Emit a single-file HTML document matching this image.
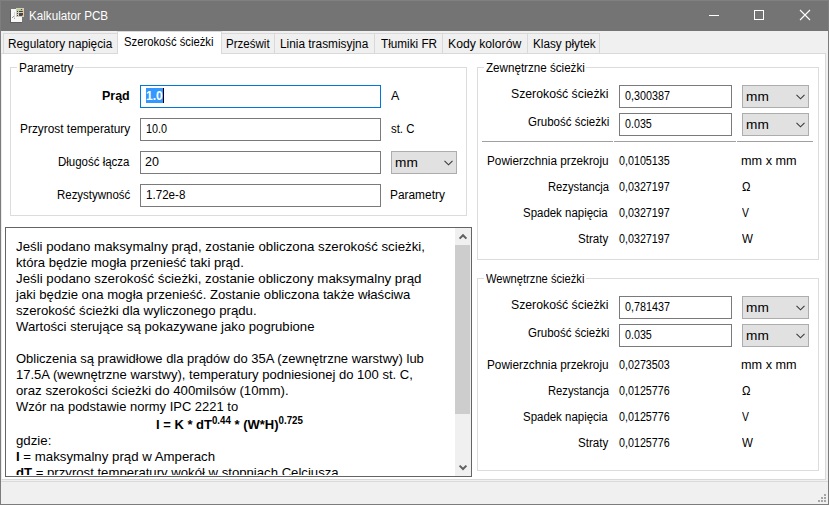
<!DOCTYPE html>
<html><head><meta charset="utf-8"><style>
html,body{margin:0;padding:0;}
body{width:829px;height:505px;position:relative;overflow:hidden;background:#f0f0f0;font-family:"Liberation Sans",sans-serif;}
.a{position:absolute;}
.t{position:absolute;white-space:pre;}
sup{font-size:10px;vertical-align:0;position:relative;top:-5px;line-height:0;}
</style></head><body>
<div class="a" style="left:0px;top:0px;width:829px;height:505px;background:#f0f0f0;"></div>
<div class="a" style="left:0px;top:0px;width:829px;height:31px;background:#747474;"></div>
<div class="a" style="left:0px;top:0px;width:829px;height:1px;background:#808080;"></div>
<div class="a" style="left:0px;top:0px;width:1px;height:31px;background:#7e7e7e;"></div>
<div class="a" style="left:828px;top:0px;width:1px;height:31px;background:#7e7e7e;"></div>
<div class="a" style="left:0px;top:31px;width:1px;height:474px;background:#7c7c7c;"></div>
<div class="a" style="left:828px;top:31px;width:1px;height:474px;background:#7c7c7c;"></div>
<div class="a" style="left:0px;top:504px;width:829px;height:1px;background:#7c7c7c;"></div>
<svg class="a" style="left:8px;top:5px" width="20" height="20" viewBox="0 0 20 20" shape-rendering="crispEdges">
<rect x="2" y="5" width="12" height="13" fill="#5e5e5e"/>
<rect x="3" y="4" width="11" height="13" fill="#f7f7f7"/>
<rect x="6" y="7" width="1" height="7" fill="#d8d8d8"/>
<rect x="4" y="12" width="1" height="1" fill="#9a9a9a"/><rect x="5" y="11" width="1" height="1" fill="#9a9a9a"/><rect x="6" y="13" width="1" height="1" fill="#b0b0b0"/>
<rect x="8" y="3" width="8" height="9" fill="#d3cdbf"/>
<rect x="9" y="4" width="6" height="2" fill="#b3cd8c"/>
<rect x="13" y="4" width="1" height="1" fill="#4a4a4a"/>
<rect x="9" y="6" width="1" height="1" fill="#3c3c3c"/><rect x="11" y="6" width="3" height="1" fill="#3c3c3c"/>
<rect x="14" y="6" width="1" height="1" fill="#a83030"/>
<rect x="9" y="8" width="1" height="1" fill="#444"/><rect x="9" y="10" width="1" height="1" fill="#444"/><rect x="11" y="8" width="4" height="3" fill="#4a4848"/>
<rect x="14" y="10" width="1" height="1" fill="#e8741c"/>
</svg>
<div class="t" style="top:10px;font-size:12px;line-height:12px;color:#fff;left:29.43px;transform:scaleX(0.9725);transform-origin:0 0;">Kalkulator PCB</div>
<div class="a" style="left:709px;top:15px;width:10px;height:1px;background:#fff;"></div>
<div class="a" style="left:754px;top:10px;width:10px;height:10px;border:1px solid #fff;box-sizing:border-box;"></div>
<svg class="a" style="left:799px;top:9px" width="12" height="12" viewBox="0 0 12 12"><path d="M1 1 L11 11 M11 1 L1 11" stroke="#fff" stroke-width="1.1" fill="none"/></svg>
<div class="a" style="left:1px;top:53px;width:825px;height:427px;background:#fff;border:1px solid #d9d9d9;box-sizing:border-box;border-left-color:#ececec;"></div>
<div class="a" style="left:3px;top:33px;width:115px;height:21px;background:#f0f0f0;border:1px solid #d9d9d9;box-sizing:border-box;"></div>
<div class="a" style="left:221px;top:33px;width:54px;height:21px;background:#f0f0f0;border:1px solid #d9d9d9;box-sizing:border-box;"></div>
<div class="a" style="left:274px;top:33px;width:101px;height:21px;background:#f0f0f0;border:1px solid #d9d9d9;box-sizing:border-box;"></div>
<div class="a" style="left:374px;top:33px;width:69px;height:21px;background:#f0f0f0;border:1px solid #d9d9d9;box-sizing:border-box;"></div>
<div class="a" style="left:442px;top:33px;width:86px;height:21px;background:#f0f0f0;border:1px solid #d9d9d9;box-sizing:border-box;"></div>
<div class="a" style="left:527px;top:33px;width:73px;height:21px;background:#f0f0f0;border:1px solid #d9d9d9;box-sizing:border-box;"></div>
<div class="t" style="top:38px;font-size:12px;line-height:12px;color:#000;left:8.42px;transform:scaleX(0.9829);transform-origin:0 0;">Regulatory napięcia</div>
<div class="t" style="top:38px;font-size:12px;line-height:12px;color:#000;left:225.54px;transform:scaleX(0.9614);transform-origin:0 0;">Prześwit</div>
<div class="t" style="top:38px;font-size:12px;line-height:12px;color:#000;left:280.41px;transform:scaleX(0.9875);transform-origin:0 0;">Linia trasmisyjna</div>
<div class="t" style="top:38px;font-size:12px;line-height:12px;color:#000;left:381.00px;transform:scaleX(0.9772);transform-origin:0 0;">Tłumiki FR</div>
<div class="t" style="top:38px;font-size:12px;line-height:12px;color:#000;left:448.38px;transform:scaleX(1.0169);transform-origin:0 0;">Kody kolorów</div>
<div class="t" style="top:38px;font-size:12px;line-height:12px;color:#000;left:533.22px;transform:scaleX(0.9778);transform-origin:0 0;">Klasy płytek</div>
<div class="a" style="left:117px;top:31px;width:105px;height:23px;background:#fff;border:1px solid #d9d9d9;box-sizing:border-box;border-bottom:none;"></div>
<div class="t" style="top:36px;font-size:12px;line-height:12px;color:#000;left:124.36px;transform:scaleX(0.9383);transform-origin:0 0;">Szerokość ścieżki</div>
<div class="a" style="left:1px;top:481px;width:827px;height:1px;background:#dadada;"></div>
<div class="a" style="left:824px;top:494px;width:2px;height:2px;background:#a5a5a5;"></div>
<div class="a" style="left:821px;top:497px;width:2px;height:2px;background:#a5a5a5;"></div>
<div class="a" style="left:824px;top:497px;width:2px;height:2px;background:#a5a5a5;"></div>
<div class="a" style="left:818px;top:500px;width:2px;height:2px;background:#a5a5a5;"></div>
<div class="a" style="left:821px;top:500px;width:2px;height:2px;background:#a5a5a5;"></div>
<div class="a" style="left:824px;top:500px;width:2px;height:2px;background:#a5a5a5;"></div>
<div class="a" style="left:10px;top:67px;width:457px;height:149px;border:1px solid #dcdcdc;box-sizing:border-box;"></div>
<div class="a" style="left:17px;top:61px;width:58px;height:9px;background:#fff;"></div>
<div class="t" style="top:62px;font-size:12px;line-height:12px;color:#000;left:18.51px;transform:scaleX(0.9852);transform-origin:0 0;">Parametry</div>
<div class="t" style="top:90px;font-size:12px;line-height:12px;color:#000;font-weight:700;left:102.36px;transform:scaleX(1.0400);transform-origin:0 0;">Prąd</div>
<div class="t" style="top:123px;font-size:12px;line-height:12px;color:#000;left:19.61px;transform:scaleX(0.9900);transform-origin:0 0;">Przyrost temperatury</div>
<div class="t" style="top:156px;font-size:12px;line-height:12px;color:#000;left:57.74px;transform:scaleX(0.9568);transform-origin:0 0;">Długość łącza</div>
<div class="t" style="top:189px;font-size:12px;line-height:12px;color:#000;left:56.95px;transform:scaleX(0.9547);transform-origin:0 0;">Rezystywność</div>
<div class="a" style="left:140px;top:85px;width:241px;height:23px;background:#fff;border:1px solid #0078d7;box-sizing:border-box;"></div>
<div class="a" style="left:146px;top:88px;width:17px;height:15px;background:#3399ff;"></div>
<div class="a" style="left:163px;top:88px;width:1px;height:15px;background:#000;"></div>
<div class="t" style="top:90px;font-size:12px;line-height:12px;color:#fff;font-weight:700;left:146.00px;transform:scaleX(1.0000);transform-origin:0 0;">1.0</div>
<div class="a" style="left:140px;top:118px;width:241px;height:23px;background:#fff;border:1px solid #7a7a7a;box-sizing:border-box;"></div>
<div class="t" style="top:123px;font-size:12px;line-height:12px;color:#000;left:145.80px;transform:scaleX(0.9000);transform-origin:0 0;">10.0</div>
<div class="a" style="left:140px;top:151px;width:241px;height:23px;background:#fff;border:1px solid #7a7a7a;box-sizing:border-box;"></div>
<div class="t" style="top:156px;font-size:12px;line-height:12px;color:#000;left:144.86px;transform:scaleX(1.0417);transform-origin:0 0;">20</div>
<div class="a" style="left:140px;top:184px;width:241px;height:23px;background:#fff;border:1px solid #7a7a7a;box-sizing:border-box;"></div>
<div class="t" style="top:189px;font-size:12px;line-height:12px;color:#000;left:145.53px;transform:scaleX(0.9667);transform-origin:0 0;">1.72e-8</div>
<div class="t" style="top:90px;font-size:12px;line-height:12px;color:#000;left:390.90px;transform:scaleX(1.0375);transform-origin:0 0;">A</div>
<div class="t" style="top:123px;font-size:12px;line-height:12px;color:#000;left:391.30px;transform:scaleX(0.9500);transform-origin:0 0;">st. C</div>
<div class="a" style="left:391px;top:151px;width:66px;height:23px;background:#e1e1e1;border:1px solid #adadad;box-sizing:border-box;"></div>
<div class="t" style="top:157px;font-size:12px;line-height:12px;color:#000;left:394.56px;transform:scaleX(1.1389);transform-origin:0 0;">mm</div>
<svg class="a" style="left:444px;top:160px" width="10" height="7" viewBox="0 0 10 7"><path d="M0.5 0.8 L4.5 4.8 L8.5 0.8" stroke="#3a3a3a" stroke-width="1.1" fill="none"/></svg>
<div class="t" style="top:189px;font-size:12px;line-height:12px;color:#000;left:390.31px;transform:scaleX(0.9907);transform-origin:0 0;">Parametry</div>
<div class="a" style="left:5px;top:227px;width:467px;height:250px;background:#fff;border:1px solid #646464;box-sizing:border-box;"></div>
<div class="a" style="left:455px;top:228px;width:16px;height:248px;background:#f0f0f0;"></div>
<div class="a" style="left:455px;top:245px;width:15px;height:169px;background:#cdcdcd;"></div>
<svg class="a" style="left:457.5px;top:232px" width="10" height="8" viewBox="0 0 10 8"><path d="M1.6 6.6 L5 3.2 L8.4 6.6" stroke="#606060" stroke-width="2" fill="none"/></svg>
<svg class="a" style="left:457.5px;top:464px" width="10" height="8" viewBox="0 0 10 8"><path d="M1.6 1.6 L5 5 L8.4 1.6" stroke="#606060" stroke-width="2" fill="none"/></svg>
<div class="a" style="left:6px;top:228px;width:449px;height:247px;overflow:hidden"><div class="t" style="left:10px;top:12px;font-size:13.333px;line-height:13.333px;transform:scaleX(0.9946);transform-origin:0 0">Jeśli podano maksymalny prąd, zostanie obliczona szerokość scieżki,</div><div class="t" style="left:10px;top:28px;font-size:13.333px;line-height:13.333px;transform:scaleX(0.9823);transform-origin:0 0">która będzie mogła przenieść taki prąd.</div><div class="t" style="left:10px;top:44px;font-size:13.333px;line-height:13.333px;transform:scaleX(0.9970);transform-origin:0 0">Jeśli podano szerokość ścieżki, zostanie obliczony maksymalny prąd</div><div class="t" style="left:10px;top:60px;font-size:13.333px;line-height:13.333px;transform:scaleX(0.9840);transform-origin:0 0">jaki będzie ona mogła przenieść. Zostanie obliczona także właściwa</div><div class="t" style="left:10px;top:76px;font-size:13.333px;line-height:13.333px;transform:scaleX(0.9901);transform-origin:0 0">szerokość ścieżki dla wyliczonego prądu.</div><div class="t" style="left:10px;top:92px;font-size:13.333px;line-height:13.333px;transform:scaleX(0.9842);transform-origin:0 0">Wartości sterujące są pokazywane jako pogrubione</div><div class="t" style="left:10px;top:124px;font-size:13.333px;line-height:13.333px;transform:scaleX(0.9744);transform-origin:0 0">Obliczenia są prawidłowe dla prądów do 35A (zewnętrzne warstwy) lub</div><div class="t" style="left:10px;top:140px;font-size:13.333px;line-height:13.333px;transform:scaleX(0.9775);transform-origin:0 0">17.5A (wewnętrzne warstwy), temperatury podniesionej do 100 st. C,</div><div class="t" style="left:10px;top:156px;font-size:13.333px;line-height:13.333px;transform:scaleX(0.9920);transform-origin:0 0">oraz szerokości ścieżki do 400milsów (10mm).</div><div class="t" style="left:10px;top:172px;font-size:13.333px;line-height:13.333px;transform:scaleX(0.9737);transform-origin:0 0">Wzór na podstawie normy IPC 2221 to</div><div class="t" style="left:10px;top:206px;font-size:13.333px;line-height:13.333px;transform:scaleX(0.9941);transform-origin:0 0">gdzie:</div><div class="t" style="left:10px;top:222px;font-size:13.333px;line-height:13.333px;transform:scaleX(0.9935);transform-origin:0 0"><b>I</b> = maksymalny prąd w Amperach</div><div class="t" style="left:10px;top:238px;font-size:13.333px;line-height:13.333px;transform:scaleX(0.9865);transform-origin:0 0"><b>dT</b> = przyrost temperatury wokół w stopniach Celcjusza</div><div class="t" style="left:149.63px;top:190px;font-size:13.333px;line-height:13.333px;font-weight:700;transform:scaleX(0.9747);transform-origin:0 0">I = K * dT<sup>0.44</sup> * (W*H)<sup>0.725</sup></div></div>
<div class="a" style="left:477px;top:67px;width:342px;height:193px;border:1px solid #dcdcdc;box-sizing:border-box;"></div>
<div class="a" style="left:484px;top:61px;width:102px;height:9px;background:#fff;"></div>
<div class="t" style="top:62px;font-size:12px;line-height:12px;color:#000;left:486.10px;transform:scaleX(0.9683);transform-origin:0 0;">Zewnętrzne ścieżki</div>
<div class="t" style="top:88px;font-size:12px;line-height:12px;color:#000;left:511.28px;transform:scaleX(1.0213);transform-origin:0 0;">Szerokość ścieżki</div>
<div class="t" style="top:116px;font-size:12px;line-height:12px;color:#000;left:527.74px;transform:scaleX(0.9590);transform-origin:0 0;">Grubość ścieżki</div>
<div class="a" style="left:619px;top:85px;width:113px;height:23px;background:#fff;border:1px solid #7a7a7a;box-sizing:border-box;"></div>
<div class="a" style="left:619px;top:113px;width:113px;height:23px;background:#fff;border:1px solid #7a7a7a;box-sizing:border-box;"></div>
<div class="t" style="top:90px;font-size:12px;line-height:12px;color:#000;left:625.10px;transform:scaleX(0.8980);transform-origin:0 0;">0,300387</div>
<div class="t" style="top:118px;font-size:12px;line-height:12px;color:#000;left:625.10px;transform:scaleX(0.8933);transform-origin:0 0;">0.035</div>
<div class="a" style="left:742px;top:85px;width:67px;height:23px;background:#e1e1e1;border:1px solid #adadad;box-sizing:border-box;"></div>
<div class="t" style="top:91px;font-size:12px;line-height:12px;color:#000;left:745.56px;transform:scaleX(1.1389);transform-origin:0 0;">mm</div>
<svg class="a" style="left:796px;top:94px" width="10" height="7" viewBox="0 0 10 7"><path d="M0.5 0.8 L4.5 4.8 L8.5 0.8" stroke="#3a3a3a" stroke-width="1.1" fill="none"/></svg>
<div class="a" style="left:742px;top:113px;width:67px;height:23px;background:#e1e1e1;border:1px solid #adadad;box-sizing:border-box;"></div>
<div class="t" style="top:119px;font-size:12px;line-height:12px;color:#000;left:745.56px;transform:scaleX(1.1389);transform-origin:0 0;">mm</div>
<svg class="a" style="left:796px;top:122px" width="10" height="7" viewBox="0 0 10 7"><path d="M0.5 0.8 L4.5 4.8 L8.5 0.8" stroke="#3a3a3a" stroke-width="1.1" fill="none"/></svg>
<div class="a" style="left:482px;top:141px;width:131px;height:1px;background:#a0a0a0;"></div>
<div class="a" style="left:614px;top:141px;width:122px;height:1px;background:#a0a0a0;"></div>
<div class="a" style="left:737px;top:141px;width:76px;height:1px;background:#a0a0a0;"></div>
<div class="t" style="top:155px;font-size:12px;line-height:12px;color:#000;left:486.92px;transform:scaleX(0.9797);transform-origin:0 0;">Powierzchnia przekroju</div>
<div class="t" style="top:155px;font-size:12px;line-height:12px;color:#000;left:619.30px;transform:scaleX(0.8946);transform-origin:0 0;">0,0105135</div>
<div class="t" style="top:155px;font-size:12px;line-height:12px;color:#000;left:741.34px;transform:scaleX(1.0569);transform-origin:0 0;">mm x mm</div>
<div class="t" style="top:181px;font-size:12px;line-height:12px;color:#000;left:547.57px;transform:scaleX(0.9344);transform-origin:0 0;">Rezystancja</div>
<div class="t" style="top:181px;font-size:12px;line-height:12px;color:#000;left:619.30px;transform:scaleX(0.8946);transform-origin:0 0;">0,0327197</div>
<div class="t" style="top:181px;font-size:12px;line-height:12px;color:#000;left:742.40px;transform:scaleX(0.9444);transform-origin:0 0;">Ω</div>
<div class="t" style="top:207px;font-size:12px;line-height:12px;color:#000;left:523.35px;transform:scaleX(0.9545);transform-origin:0 0;">Spadek napięcia</div>
<div class="t" style="top:207px;font-size:12px;line-height:12px;color:#000;left:619.30px;transform:scaleX(0.8946);transform-origin:0 0;">0,0327197</div>
<div class="t" style="top:207px;font-size:12px;line-height:12px;color:#000;left:742.20px;transform:scaleX(0.8625);transform-origin:0 0;">V</div>
<div class="t" style="top:233px;font-size:12px;line-height:12px;color:#000;left:578.33px;transform:scaleX(0.9667);transform-origin:0 0;">Straty</div>
<div class="t" style="top:233px;font-size:12px;line-height:12px;color:#000;left:619.30px;transform:scaleX(0.8946);transform-origin:0 0;">0,0327197</div>
<div class="t" style="top:233px;font-size:12px;line-height:12px;color:#000;left:742.20px;transform:scaleX(0.9636);transform-origin:0 0;">W</div>
<div class="a" style="left:477px;top:278px;width:342px;height:193px;border:1px solid #dcdcdc;box-sizing:border-box;"></div>
<div class="a" style="left:484px;top:272px;width:102px;height:9px;background:#fff;"></div>
<div class="t" style="top:273px;font-size:12px;line-height:12px;color:#000;left:486.30px;transform:scaleX(0.9295);transform-origin:0 0;">Wewnętrzne ścieżki</div>
<div class="t" style="top:299px;font-size:12px;line-height:12px;color:#000;left:511.28px;transform:scaleX(1.0213);transform-origin:0 0;">Szerokość ścieżki</div>
<div class="t" style="top:327px;font-size:12px;line-height:12px;color:#000;left:527.74px;transform:scaleX(0.9590);transform-origin:0 0;">Grubość ścieżki</div>
<div class="a" style="left:619px;top:296px;width:113px;height:23px;background:#fff;border:1px solid #7a7a7a;box-sizing:border-box;"></div>
<div class="a" style="left:619px;top:324px;width:113px;height:23px;background:#fff;border:1px solid #7a7a7a;box-sizing:border-box;"></div>
<div class="t" style="top:301px;font-size:12px;line-height:12px;color:#000;left:625.10px;transform:scaleX(0.8980);transform-origin:0 0;">0,781437</div>
<div class="t" style="top:329px;font-size:12px;line-height:12px;color:#000;left:625.10px;transform:scaleX(0.8933);transform-origin:0 0;">0.035</div>
<div class="a" style="left:742px;top:296px;width:67px;height:23px;background:#e1e1e1;border:1px solid #adadad;box-sizing:border-box;"></div>
<div class="t" style="top:302px;font-size:12px;line-height:12px;color:#000;left:745.56px;transform:scaleX(1.1389);transform-origin:0 0;">mm</div>
<svg class="a" style="left:796px;top:305px" width="10" height="7" viewBox="0 0 10 7"><path d="M0.5 0.8 L4.5 4.8 L8.5 0.8" stroke="#3a3a3a" stroke-width="1.1" fill="none"/></svg>
<div class="a" style="left:742px;top:324px;width:67px;height:23px;background:#e1e1e1;border:1px solid #adadad;box-sizing:border-box;"></div>
<div class="t" style="top:330px;font-size:12px;line-height:12px;color:#000;left:745.56px;transform:scaleX(1.1389);transform-origin:0 0;">mm</div>
<svg class="a" style="left:796px;top:333px" width="10" height="7" viewBox="0 0 10 7"><path d="M0.5 0.8 L4.5 4.8 L8.5 0.8" stroke="#3a3a3a" stroke-width="1.1" fill="none"/></svg>
<div class="t" style="top:359px;font-size:12px;line-height:12px;color:#000;left:486.92px;transform:scaleX(0.9797);transform-origin:0 0;">Powierzchnia przekroju</div>
<div class="t" style="top:359px;font-size:12px;line-height:12px;color:#000;left:619.30px;transform:scaleX(0.8946);transform-origin:0 0;">0,0273503</div>
<div class="t" style="top:359px;font-size:12px;line-height:12px;color:#000;left:741.34px;transform:scaleX(1.0569);transform-origin:0 0;">mm x mm</div>
<div class="t" style="top:385px;font-size:12px;line-height:12px;color:#000;left:547.57px;transform:scaleX(0.9344);transform-origin:0 0;">Rezystancja</div>
<div class="t" style="top:385px;font-size:12px;line-height:12px;color:#000;left:619.30px;transform:scaleX(0.8946);transform-origin:0 0;">0,0125776</div>
<div class="t" style="top:385px;font-size:12px;line-height:12px;color:#000;left:742.40px;transform:scaleX(0.9444);transform-origin:0 0;">Ω</div>
<div class="t" style="top:411px;font-size:12px;line-height:12px;color:#000;left:523.35px;transform:scaleX(0.9545);transform-origin:0 0;">Spadek napięcia</div>
<div class="t" style="top:411px;font-size:12px;line-height:12px;color:#000;left:619.30px;transform:scaleX(0.8946);transform-origin:0 0;">0,0125776</div>
<div class="t" style="top:411px;font-size:12px;line-height:12px;color:#000;left:742.20px;transform:scaleX(0.8625);transform-origin:0 0;">V</div>
<div class="t" style="top:437px;font-size:12px;line-height:12px;color:#000;left:578.33px;transform:scaleX(0.9667);transform-origin:0 0;">Straty</div>
<div class="t" style="top:437px;font-size:12px;line-height:12px;color:#000;left:619.30px;transform:scaleX(0.8946);transform-origin:0 0;">0,0125776</div>
<div class="t" style="top:437px;font-size:12px;line-height:12px;color:#000;left:742.20px;transform:scaleX(0.9636);transform-origin:0 0;">W</div>
</body></html>
